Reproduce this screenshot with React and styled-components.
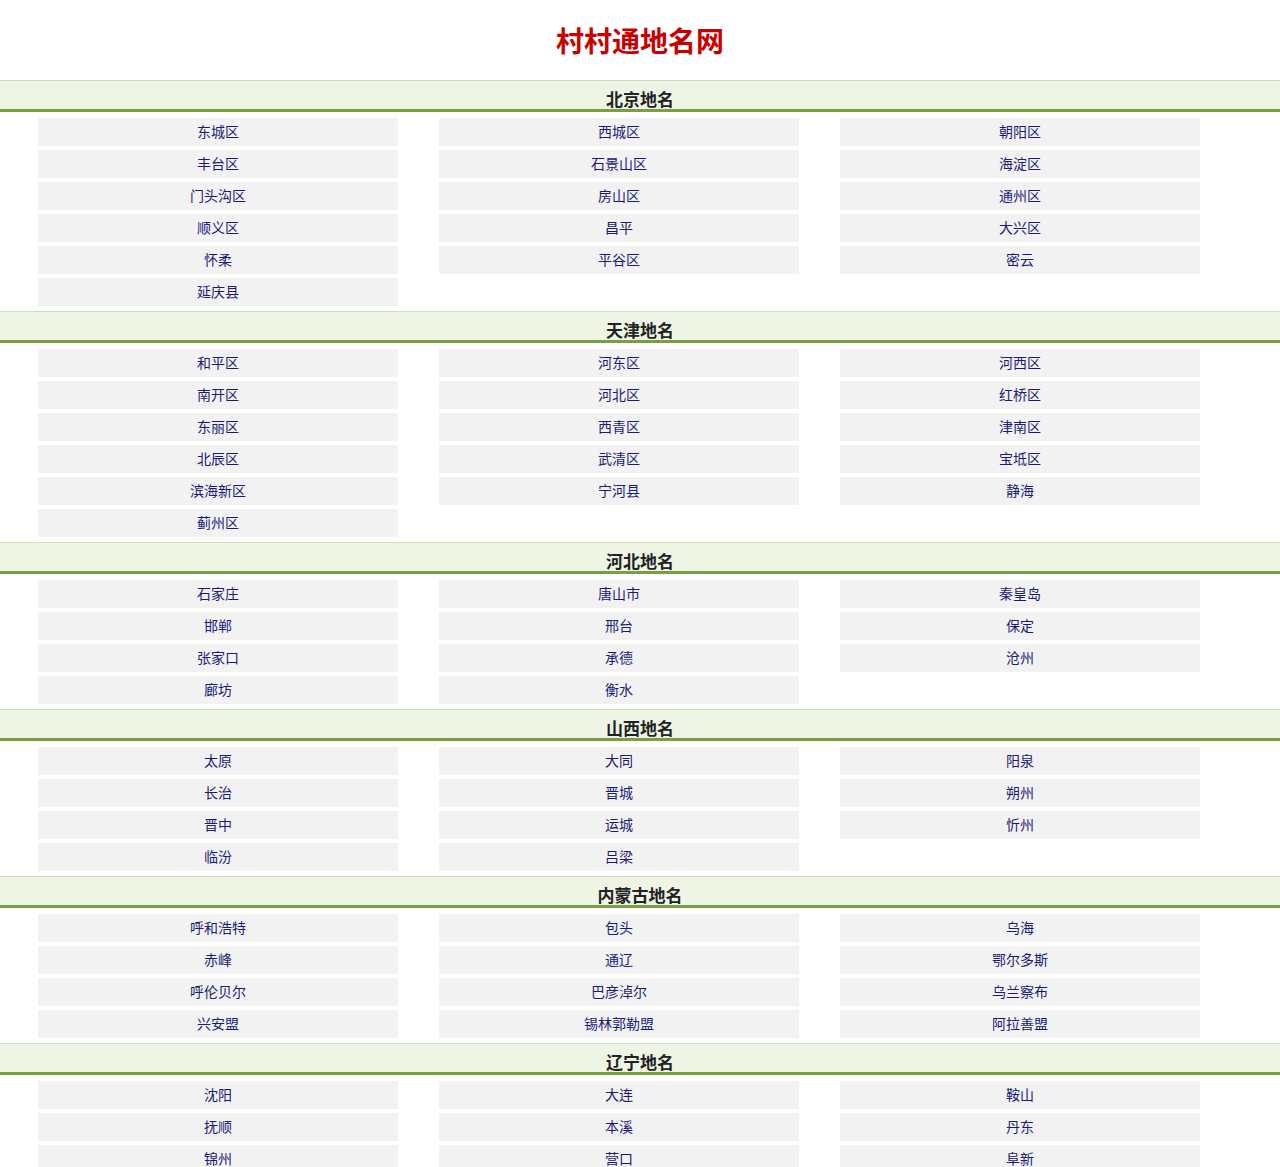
import styled, { createGlobalStyle } from 'styled-components'

const regions = [
  {
    name: '北京地名',
    places: ['东城区', '西城区', '朝阳区', '丰台区', '石景山区', '海淀区', '门头沟区', '房山区', '通州区', '顺义区', '昌平', '大兴区', '怀柔', '平谷区', '密云', '延庆县']
  },
  {
    name: '天津地名',
    places: ['和平区', '河东区', '河西区', '南开区', '河北区', '红桥区', '东丽区', '西青区', '津南区', '北辰区', '武清区', '宝坻区', '滨海新区', '宁河县', '静海', '蓟州区']
  },
  {
    name: '河北地名',
    places: ['石家庄', '唐山市', '秦皇岛', '邯郸', '邢台', '保定', '张家口', '承德', '沧州', '廊坊', '衡水']
  },
  {
    name: '山西地名',
    places: ['太原', '大同', '阳泉', '长治', '晋城', '朔州', '晋中', '运城', '忻州', '临汾', '吕梁']
  },
  {
    name: '内蒙古地名',
    places: ['呼和浩特', '包头', '乌海', '赤峰', '通辽', '鄂尔多斯', '呼伦贝尔', '巴彦淖尔', '乌兰察布', '兴安盟', '锡林郭勒盟', '阿拉善盟']
  },
  {
    name: '辽宁地名',
    places: ['沈阳', '大连', '鞍山', '抚顺', '本溪', '丹东', '锦州', '营口', '阜新', '辽阳', '盘锦', '铁岭', '朝阳', '葫芦岛']
  }
]

export default function App() {
  return (
    <>
      <GlobalStyle />
      <Page>
        <Title>村村通地名网</Title>

        {regions.map((region) => (
          <section key={region.name}>
            {/* province bar */}
            <SectionHeader>{region.name}</SectionHeader>

            {/* three-column list of places */}
            <PlaceGrid>
              {region.places.map((place) => (
                <PlaceLink key={place} href="#">
                  {place}
                </PlaceLink>
              ))}
            </PlaceGrid>
          </section>
        ))}
      </Page>
    </>
  )
}

const GlobalStyle = createGlobalStyle`
  body {
    margin: 0;
    background: #fff;
    font-family: "Noto Sans CJK SC", "Noto Sans", sans-serif;
  }
`

const Page = styled.div`
  width: 1280px;
`

const Title = styled.h1`
  margin: 0;
  height: 80px;
  line-height: 80px;
  text-align: center;
  font-size: 28px;
  font-weight: 700;
  color: #c80000;
`

const SectionHeader = styled.h2`
  margin: 0;
  height: 21px;
  padding-top: 7px;
  line-height: 21px;
  text-align: center;
  font-size: 17px;
  font-weight: 700;
  color: #222;
  background: #eef5e5;
  border-top: 1px solid #cfdcbe;
  border-bottom: 3px solid #77a042;
`

const PlaceGrid = styled.div`
  display: grid;
  grid-template-columns: repeat(3, 360px);
  column-gap: 41px;
  row-gap: 4px;
  padding: 6px 0 5px 38px;
`

const PlaceLink = styled.a`
  display: block;
  height: 26px;
  padding-bottom: 2px;
  line-height: 26px;
  text-align: center;
  font-size: 14px;
  color: #1a1a7a;
  text-decoration: none;
  background: #f2f2f2;
`
